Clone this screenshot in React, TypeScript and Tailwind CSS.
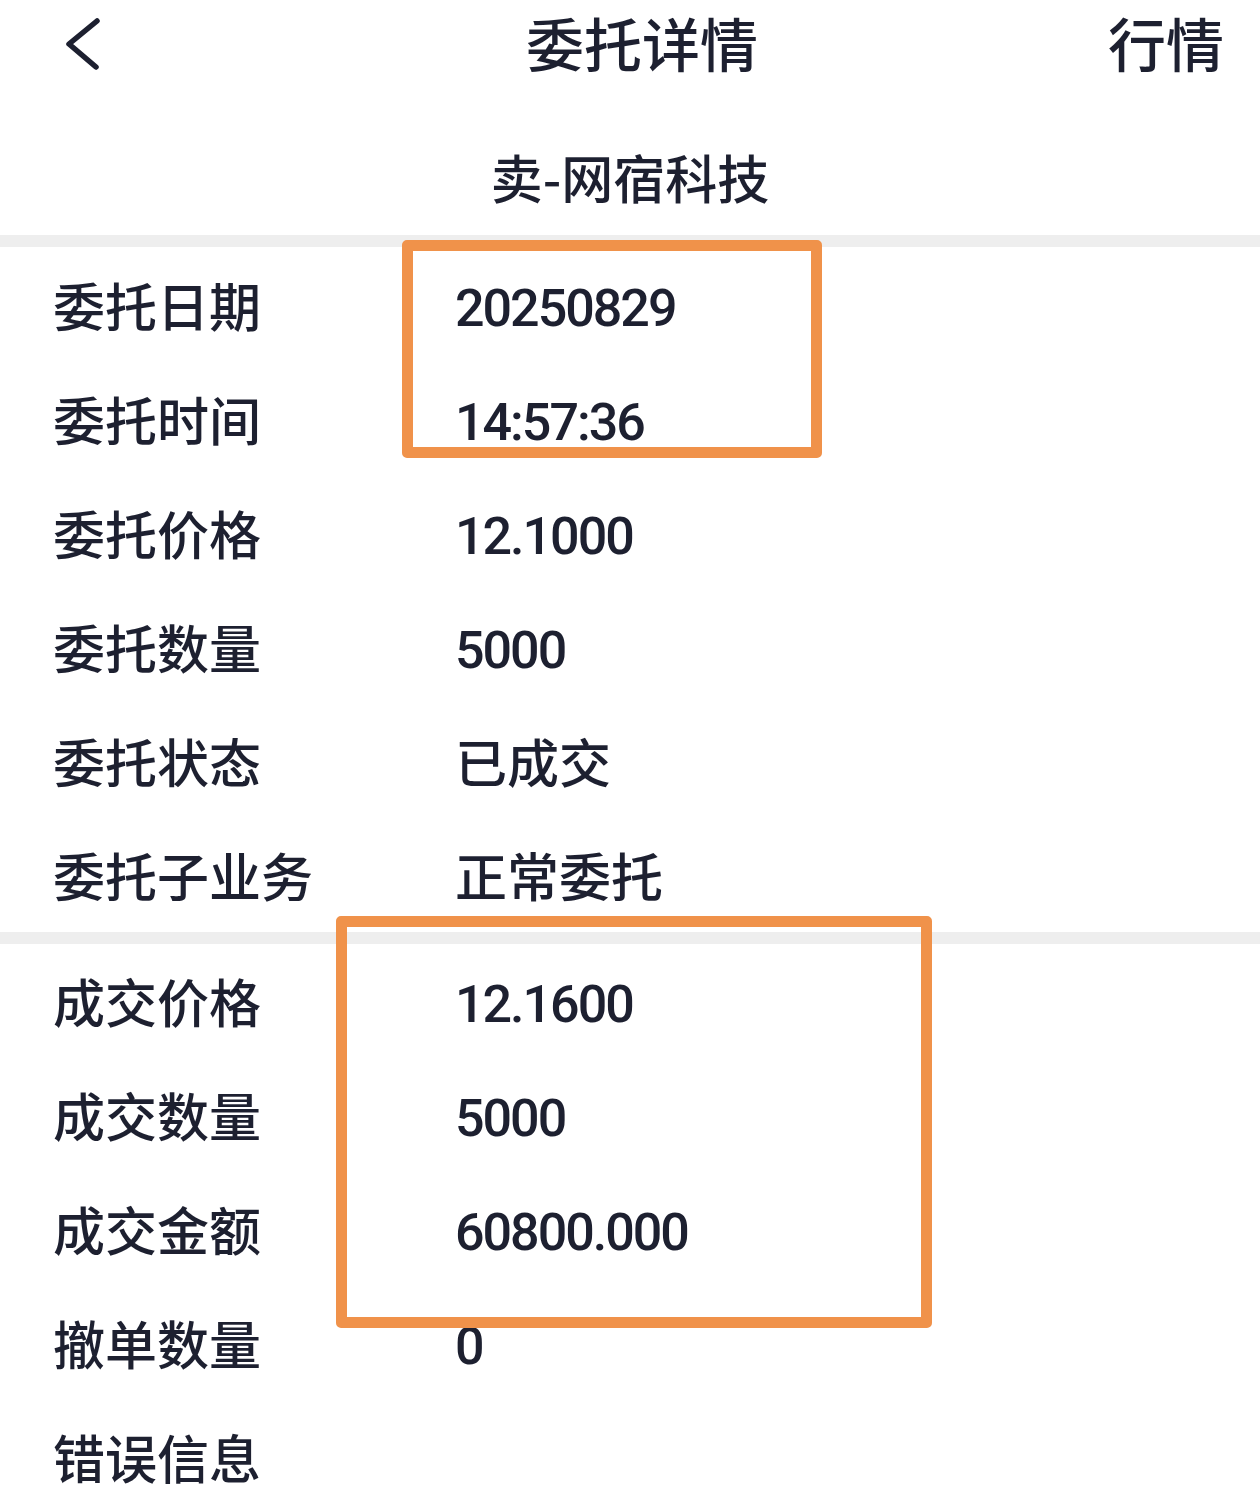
import React from "react";

const cjk = "font-['Noto_Sans_CJK_SC','Noto_Sans',sans-serif]";

type Row = { label: string; value: string };

const section1: Row[] = [
  { label: "委托日期", value: "20250829" },
  { label: "委托时间", value: "14:57:36" },
  { label: "委托价格", value: "12.1000" },
  { label: "委托数量", value: "5000" },
  { label: "委托状态", value: "已成交" },
  { label: "委托子业务", value: "正常委托" },
];

const section2: Row[] = [
  { label: "成交价格", value: "12.1600" },
  { label: "成交数量", value: "5000" },
  { label: "成交金额", value: "60800.000" },
  { label: "撤单数量", value: "0" },
  { label: "错误信息", value: "" },
];

function isNumeric(v: string) {
  return /^[0-9.:]+$/.test(v);
}

function DetailRow({ label, value }: Row) {
  const numeric = isNumeric(value);
  return (
    <div className="flex h-[114px] items-center">
      <div
        className={`w-[455px] shrink-0 pl-[53px] text-[52px] font-medium leading-none text-[#1d2030] ${cjk}`}
      >
        {label}
      </div>
      {value &&
        (numeric ? (
          <div className="mt-[8px] font-['Roboto',sans-serif] text-[52px] font-medium leading-none tracking-[-2px] text-[#1d2030]">
            {value}
          </div>
        ) : (
          <div
            className={`text-[52px] font-medium leading-none text-[#1d2030] ${cjk}`}
          >
            {value}
          </div>
        ))}
    </div>
  );
}

export default function App() {
  return (
    <div className="relative h-[1498px] w-full overflow-hidden bg-white">
      {/* Header */}
      <div className="flex h-[84px] items-center">
        <div className="flex w-[526px] shrink-0 items-center pl-[64px]">
          <svg
            width="40"
            height="56"
            viewBox="0 0 40 56"
            fill="none"
            stroke="#1d2030"
            strokeWidth="5.5"
            strokeLinecap="round"
            strokeLinejoin="round"
          >
            <polyline points="33,7 5,30 32,53" />
          </svg>
        </div>
        <div
          className={`shrink-0 text-[58px] font-medium leading-none text-[#1d2030] ${cjk}`}
        >
          委托详情
        </div>
        <div className="flex-1" />
        <div
          className={`pr-[36px] text-[58px] font-medium leading-none text-[#1d2030] ${cjk}`}
        >
          行情
        </div>
      </div>

      {/* Subtitle */}
      <div
        className={`pb-[32px] pt-[67px] text-center text-[52px] font-medium leading-none text-[#1d2030] ${cjk}`}
      >
        卖-网宿科技
      </div>

      <div className="h-[12px] bg-[#eeeeee]" />

      <div className="flex flex-col pt-[1px]">
        {section1.map((r) => (
          <DetailRow key={r.label} {...r} />
        ))}
      </div>

      <div className="h-[12px] bg-[#eeeeee]" />

      <div className="flex flex-col">
        {section2.map((r) => (
          <DetailRow key={r.label} {...r} />
        ))}
      </div>

      {/* Annotation boxes */}
      <div className="pointer-events-none absolute left-[402px] top-[240px] h-[218px] w-[420px] rounded-[5px] border-[11px] border-[#f0924a]" />
      <div className="pointer-events-none absolute left-[336px] top-[916px] h-[412px] w-[596px] rounded-[5px] border-[11px] border-[#f0924a]" />
    </div>
  );
}
